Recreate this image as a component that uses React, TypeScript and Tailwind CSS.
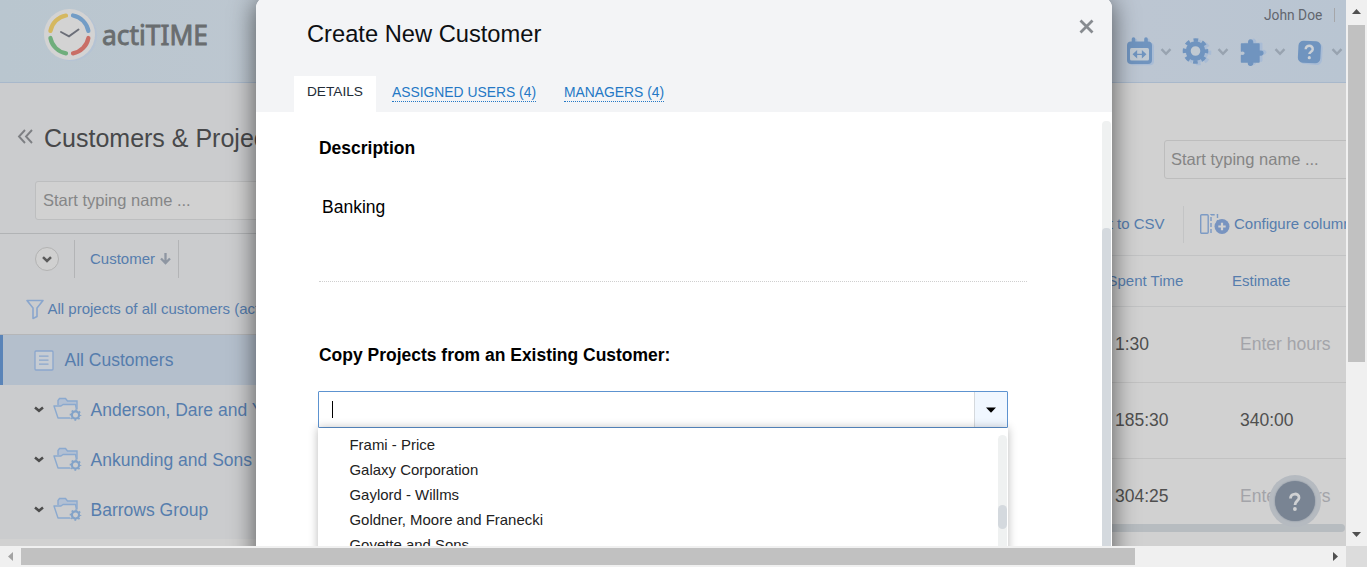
import React from 'react';

const projects = ['Anderson, Dare and Young', 'Ankunding and Sons', 'Barrows Group'];
const rows = [
  { spent: '1:30', estimate: '' },
  { spent: '185:30', estimate: '340:00' },
  { spent: '304:25', estimate: '' },
];
const options = ['Frami - Price', 'Galaxy Corporation', 'Gaylord - Willms', 'Goldner, Moore and Franecki', 'Goyette and Sons'];

function Logo() {
  return (
    <svg width="260" height="82" viewBox="0 0 260 82" className="shrink-0">
      <circle cx="71.5" cy="35.5" r="25.5" fill="#b5c3d4" />
      <circle cx="69.5" cy="34.5" r="25.5" fill="#d3d3d3" />
      <g fill="none" strokeWidth="4.2" strokeLinecap="round">
        <path d="M66 15.5A19.3 19.3 0 0 0 50.4 31" stroke="#d5b860" />
        <path d="M73 15.5A19.3 19.3 0 0 1 88.4 31" stroke="#739dc6" />
        <path d="M50.4 38A19.3 19.3 0 0 0 66 53.4" stroke="#6fae7c" />
        <path d="M88.4 38A19.3 19.3 0 0 1 73 53.4" stroke="#c96e66" />
        <path d="M61 32l8 4.3 9.5-6.8" stroke="#6b6e78" strokeWidth="1.9" />
      </g>
      <text x="102" y="45" fontFamily="Noto Sans, sans-serif" fontSize="28" textLength="106" lengthAdjust="spacingAndGlyphs" fill="#696d6f" stroke="#696d6f" strokeWidth="0.9">actiTIME</text>
    </svg>
  );
}

function Chevron() {
  return (
    <svg width="12" height="10" viewBox="0 0 12 10" className="shrink-0">
      <path d="M1.500 2.200l4.500 4.600 4.500-4.600" fill="none" stroke="#98a3b0" strokeWidth="2.400" />
    </svg>
  );
}

function CalendarShape({ color }: { color: string }) {
  return (
    <g>
      <rect x="2" y="4.500" width="25" height="22.500" rx="4" fill={color} />
      <path d="M8.500 2v5M21 2v5" stroke={color} strokeWidth="3.600" strokeLinecap="round" />
    </g>
  );
}

function CalendarIcon() {
  return (
    <svg width="30" height="30" viewBox="0 0 30 30">
      <g transform="translate(2 1.300)"><CalendarShape color="#a9bcd5" /></g>
      <CalendarShape color="#7094bf" />
      <rect x="5" y="11" width="19" height="12.500" rx="1.500" fill="#c0c9d2" />
      <path d="M10 17.300h9M11.500 14.500L8.500 17.300l3 2.800zM17.500 14.500L20.500 17.300l-3 2.800z" fill="#7094bf" stroke="#7094bf" strokeWidth="1.300" />
    </svg>
  );
}

function GearShape({ color }: { color: string }) {
  return (
    <g fill="none" stroke={color}>
      <circle cx="13.500" cy="14" r="7.300" strokeWidth="5" />
      <circle cx="13.500" cy="14" r="11" strokeWidth="3.600" strokeDasharray="4.600 4.040" strokeDashoffset="2.300" />
    </g>
  );
}

function GearIcon() {
  return (
    <svg width="30" height="30" viewBox="0 0 30 30">
      <g transform="translate(3 1.500)"><GearShape color="#a9bcd5" /></g>
      <circle cx="13.500" cy="14" r="6" fill="#c0c9d2" />
      <GearShape color="#7094bf" />
    </svg>
  );
}

function PuzzleIcon() {
  const d = 'M2.500 7h7.500c-1.800-5.500 4.800-5.500 3.500 0h6.500v7.500c5-1.800 5.500 4.500 0 3.500V25h-6.500c1.500 4.500-5.500 4.500-3.800 0H2.500v-6.500c5 1.300 5-5.800 0-4.500z';
  return (
    <svg width="30" height="30" viewBox="0 0 30 30">
      <path d={d} fill="#a9bcd5" stroke="#a9bcd5" strokeLinejoin="round" transform="translate(3 -0.800)" />
      <path d={d} fill="#7094bf" stroke="#7094bf" strokeWidth="1.400" strokeLinejoin="round" />
    </svg>
  );
}

function HelpIcon() {
  return (
    <svg width="30" height="30" viewBox="0 0 30 30">
      <rect x="4.500" y="5.500" width="22" height="22" rx="5" fill="#a9bcd5" transform="rotate(4 15 15)" />
      <rect x="2.200" y="4" width="22.500" height="22" rx="5" fill="#7094bf" transform="rotate(3 13 14)" />
      <path d="M9.700 12.300c.2-5 7.300-4.300 7 0-.2 2.500-3.300 2.300-3.300 4.800" fill="none" stroke="#cbd0d6" strokeWidth="2.500" />
      <circle cx="13.300" cy="20.700" r="1.600" fill="#cbd0d6" />
    </svg>
  );
}

function FolderIcon() {
  return (
    <svg width="30" height="26" viewBox="0 0 30 26" className="shrink-0">
      <path d="M5 8V3.500L6.500 1.500h6L14.500 4H24v12" fill="#b3c0d3" stroke="#8ba9cf" strokeWidth="1.400" />
      <path d="M1 9h7l2-1.500h12.500L25 21H5z" fill="#cbccce" stroke="#8ba9cf" strokeWidth="1.400" strokeLinejoin="round" />
      <circle cx="22.500" cy="18" r="6" fill="#cbccce" />
      <circle cx="22.500" cy="18" r="3.600" fill="#cbccce" stroke="#83a3c8" strokeWidth="2.200" />
      <circle cx="22.500" cy="18" r="5" fill="none" stroke="#83a3c8" strokeWidth="1.600" strokeDasharray="1.700 2.227" strokeDashoffset="0.850" />
    </svg>
  );
}

function Header() {
  return (
    <header className="flex h-[83px] shrink-0 items-start justify-between border-b border-[#a8b8cb] bg-gradient-to-r from-[#b9c6cf] via-[#c3c8d2] to-[#b9c5d2]">
      <Logo />
      <div className="flex w-[222px] flex-col">
        <div className="flex h-[30px] items-center gap-[12px] pl-[140px] font-[Roboto,sans-serif] text-[13.800px] text-[#62666e]">
          <span className="whitespace-nowrap">John Doe</span>
          <span className="h-[14px] w-px shrink-0 bg-[#a5a6a9]" />
        </div>
        <div className="flex items-center pl-px pt-[7px]">
          <div className="flex w-[57px] shrink-0 items-center gap-[5px]"><CalendarIcon /><Chevron /></div>
          <div className="flex w-[57px] shrink-0 items-center gap-[5px]"><GearIcon /><Chevron /></div>
          <div className="flex w-[57px] shrink-0 items-center gap-[5px]"><PuzzleIcon /><Chevron /></div>
          <div className="flex shrink-0 items-center gap-[5px]"><HelpIcon /><Chevron /></div>
        </div>
      </div>
    </header>
  );
}

function Sidebar() {
  return (
    <aside className="flex w-[600px] shrink-0 flex-col bg-[#cbccce]">
      <div className="flex h-[98px] items-center pl-[17px] pt-[14px]">
        <svg width="17" height="16" viewBox="0 0 17 16" className="mr-[10px] mt-[-5px]">
          <path d="M8 1L2 7.500 8 14M15 1L9 7.500 15 14" fill="none" stroke="#7d7f83" strokeWidth="1.900" />
        </svg>
        <h1 className="whitespace-nowrap text-[25px] text-[#47484a]">Customers &amp; Projects</h1>
      </div>
      <div className="ml-[35px] flex h-[39px] items-center rounded-[3px] border border-[#bdbebf] bg-[#d1d1d1] pl-[7px] text-[16.500px] text-[#858687]">Start typing name ...</div>
      <div className="mt-[13px] flex h-[51px] items-center border-t border-[#b1b3b5]">
        <span className="ml-[35px] flex size-[24px] items-center justify-center rounded-full border-[1.500px] border-[#b3b3b3] bg-[#d0d0d0]">
          <svg width="10" height="7" viewBox="0 0 10 7"><path d="M1 1.200l4 3.800 4-3.800" fill="none" stroke="#5b5b5b" strokeWidth="2.500" /></svg>
        </span>
        <span className="ml-[15px] flex h-[38px] w-[105px] items-center border-x border-[#b3b4b6] pl-[15px] text-[15px] text-[#567dad]">
          Customer
          <svg width="11" height="12" viewBox="0 0 11 12" className="ml-[5px]"><path d="M5.500 0v9M1 5.500l4.500 4.500L10 5.500" fill="none" stroke="#8e96a2" strokeWidth="2.300" /></svg>
        </span>
      </div>
      <div className="flex h-[50px] items-center pl-[26px]">
        <svg width="18" height="21" viewBox="0 0 18 21" className="mr-[3.500px] shrink-0"><path d="M1 1.500h16L11 9v8.500L7 19.500V9z" fill="none" stroke="#8aa6cd" strokeWidth="1.600" strokeLinejoin="round" /></svg>
        <span className="whitespace-nowrap text-[15px] text-[#567dad]">All projects of all customers (active only)</span>
      </div>
      <div className="flex h-[51px] items-center border-t border-[#b5b6b8] bg-[#b4bfcc] text-[17.500px] text-[#567dad]">
        <span className="h-full w-[3px] bg-[#5a84b8]" />
        <svg width="20" height="21" viewBox="0 0 20 21" className="ml-[30.500px] mr-[11px]">
          <rect x="1" y="1" width="18" height="19" rx="1" fill="#c6ccd3" stroke="#8aa6cd" strokeWidth="1.300" />
          <path d="M5 6.200h9.500M5 10.200h9.500M5 14.200h9.500" stroke="#8aa6cd" strokeWidth="1.300" />
        </svg>
        All Customers
      </div>
      {projects.map((name) => (
        <div key={name} className="flex h-[50px] shrink-0 items-center whitespace-nowrap text-[17.500px] text-[#567dad]">
          <svg width="10" height="7" viewBox="0 0 10 7" className="mb-[2px] ml-[33.500px] mr-[9.500px] shrink-0"><path d="M1 1.500l4 3.300 4-3.300" fill="none" stroke="#4d4d4d" strokeWidth="2.500" /></svg>
          <FolderIcon />
          <span className="ml-[7.500px]">{name}</span>
        </div>
      ))}
    </aside>
  );
}

function Main() {
  return (
    <main className="flex min-w-0 flex-1 flex-col overflow-hidden bg-[#d1d1d1] pl-[507px]">
      <div className="ml-[57px] mr-[-10px] mt-[57px] flex h-[39px] shrink-0 items-center rounded-[3px] border border-[#bdbdbd] pl-[6px] text-[16.500px] text-[#858585]">Start typing name ...</div>
      <div className="flex h-[77px] shrink-0 items-center border-b border-[#c2c3c4] pt-[14px] text-[15px] text-[#567dad]">
        <span className="flex w-[76px] justify-end whitespace-nowrap pr-[18.500px]">Export to CSV</span>
        <span className="h-[37px] w-px shrink-0 bg-[#c3c4c5]" />
        <svg width="31" height="22" viewBox="0 0 31 22" className="ml-[15px] mr-[4px] shrink-0">
          <rect x="1.700" y="1.700" width="7.500" height="18.600" rx="1" fill="none" stroke="#7c9ac4" strokeWidth="1.400" />
          <path d="M12 20V1.700h6.500V9" fill="none" stroke="#7c9ac4" strokeWidth="1.400" strokeDasharray="4 2" />
          <circle cx="23" cy="13.500" r="7.500" fill="#7894c0" />
          <path d="M23 9.800v7.400M19.300 13.500h7.400" stroke="#d1d1d1" strokeWidth="2.200" />
        </svg>
        <span className="whitespace-nowrap">Configure columns</span>
      </div>
      <div className="flex h-[51px] shrink-0 items-center border-b border-[#c2c3c4] text-[15px] text-[#567dad]">
        <span className="w-[125px] whitespace-nowrap pl-[0.500px]">Spent Time</span><span>Estimate</span>
      </div>
      {rows.map((r) => (
        <div key={r.spent} className="flex h-[76px] shrink-0 items-center border-b border-[#c2c2c2] pl-[8px] text-[17.500px] text-[#4f4f4f] last:border-transparent">
          <span className="w-[125px]">{r.spent}</span>
          {r.estimate ? <span>{r.estimate}</span> : <span className="whitespace-nowrap text-[#a3a4a9]">Enter hours</span>}
        </div>
      ))}
    </main>
  );
}

function Combo() {
  return (
    <div className="relative ml-[-1px] mt-[24px] w-[690px]">
      <div className="flex h-[37px] items-center justify-between rounded-[1px] border border-[#5d93d0] bg-white">
        <span className="ml-[13px] h-[17px] w-px bg-black" />
        <span className="flex h-full w-[33px] items-center justify-center border-l border-[#d5d9dd] bg-[#f0f7ff]">
          <svg width="10" height="6" viewBox="0 0 10 6"><path d="M0 .5h10L5 5.700z" fill="#000" /></svg>
        </span>
      </div>
      <div className="absolute left-0 top-[37px] flex h-[260px] w-[690px] justify-between bg-white pl-[31.500px] shadow-[0_0_9px_rgba(0,0,0,0.28)]">
        <ul className="pt-[4px] text-[14.950px] text-[#222]">
          {options.map((o) => <li key={o} className="h-[25px] leading-[26px]">{o}</li>)}
        </ul>
        <div className="mr-px mt-[7px] w-[9px] rounded-full bg-[#eff1f1] pt-[70px]">
          <div className="h-[24px] rounded-full bg-[#d4d9de]" />
        </div>
      </div>
    </div>
  );
}

function Dialog() {
  return (
    <section className="absolute left-[256px] top-[-3px] flex h-[640px] w-[856px] flex-col overflow-visible rounded-[11px] bg-white shadow-[0_3px_26px_rgba(0,0,0,0.6)]">
      <header className="flex h-[115px] shrink-0 flex-col justify-between rounded-t-[11px] bg-[#f3f4f6]">
        <div className="flex items-start justify-between pl-[51px] pr-[18px] pt-[19px]">
          <h2 className="text-[23.700px] leading-[36px] text-[#0d0f12]">Create New Customer</h2>
          <svg width="15" height="15" viewBox="0 0 15 15" className="mt-[3px]"><path d="M1.500 1.500l12 12M13.500 1.500l-12 12" stroke="#878b90" strokeWidth="2.800" /></svg>
        </div>
        <nav className="flex h-[36px] pl-[38px] text-[13.860px]">
          <span className="flex w-[82px] items-center justify-center bg-white pb-[3px] text-[13.700px] text-[#222b36]">DETAILS</span>
          <span className="ml-[16px] pt-[7px] text-[#2478c5]"><span className="block border-b border-dotted border-[#2478c5] leading-[18px]">ASSIGNED USERS (4)</span></span>
          <span className="ml-[28px] pt-[7px] text-[#2478c5]"><span className="block border-b border-dotted border-[#2478c5] leading-[18px]">MANAGERS (4)</span></span>
        </nav>
      </header>
      <div className="flex min-h-0 flex-1 justify-between">
        <div className="flex flex-col pl-[63px] text-black">
          <h3 className="mt-[24px] text-[17.480px] font-bold leading-[24px]">Description</h3>
          <p className="mt-[35px] pl-[3px] text-[17.500px] leading-[24px]">Banking</p>
          <div className="mt-[62px] w-[708px] border-b border-dotted border-[#cfcfcf]" />
          <h3 className="mt-[61px] whitespace-nowrap text-[17.480px] font-bold leading-[24px]">Copy Projects from an Existing Customer:</h3>
          <Combo />
        </div>
        <div className="mr-px mt-[9px] w-[9px] rounded-t-[4px] bg-[#eff1f1] pt-[107px]">
          <div className="h-full rounded-t-[4px] bg-[#d4d9de]" />
        </div>
      </div>
    </section>
  );
}

export default function App() {
  return (
    <div className="grid h-[567px] w-[1367px] grid-cols-[1346px_21px] grid-rows-[546px_21px] overflow-hidden bg-[#f0f0f0] font-['Liberation_Sans',Arial,sans-serif]">
      <div className="relative flex h-[546px] w-[1346px] flex-col overflow-hidden bg-[#d1d1d1]">
        <Header />
        <div className="flex h-[456px] shrink-0"><Sidebar /><Main /></div>
        <div className="absolute left-[900px] top-[524px] h-[8px] w-[445px] rounded-full bg-[#b7bcc0]" />
        <div className="absolute left-[1269px] top-[475px] flex size-[52px] items-center justify-center rounded-full bg-[#b5bac0]">
          <div className="flex size-[40px] items-center justify-center rounded-full bg-[#798493] shadow-[0_0_2px_#798493]">
            <svg width="14" height="22" viewBox="0 0 14 22" className="mt-[2px]"><path d="M2.500 7.500C2.500 1.500 11.300 1.800 11 6.800 10.700 10 7 10 7 14" fill="none" stroke="#d0d1d3" strokeWidth="2.800" /><circle cx="6.900" cy="18" r="1.900" fill="#d0d1d3" /></svg>
          </div>
        </div>
        <Dialog />
      </div>
      <div className="flex flex-col items-center justify-between pb-[9px] pt-[9px]">
        <svg width="9" height="5" viewBox="0 0 9 5"><path d="M0 5L4.500 0 9 5z" fill="#505050" /></svg>
        <div className="mb-auto mt-[11px] h-[337px] w-[17px] bg-[#c1c1c1]" />
        <svg width="9" height="5" viewBox="0 0 9 5"><path d="M0 0l4.500 5L9 0z" fill="#505050" /></svg>
      </div>
      <div className="flex items-center">
        <svg width="5" height="9" viewBox="0 0 5 9" className="ml-[8px] mr-[8px]"><path d="M5 0L0 4.500 5 9z" fill="#a3a3a3" /></svg>
        <div className="h-[17px] w-[1114px] bg-[#c1c1c1]" />
        <svg width="5" height="9" viewBox="0 0 5 9" className="ml-auto mr-[8px]"><path d="M0 0l5 4.500L0 9z" fill="#505050" /></svg>
      </div>
      <div className="bg-[#dcdcdc]" />
    </div>
  );
}
